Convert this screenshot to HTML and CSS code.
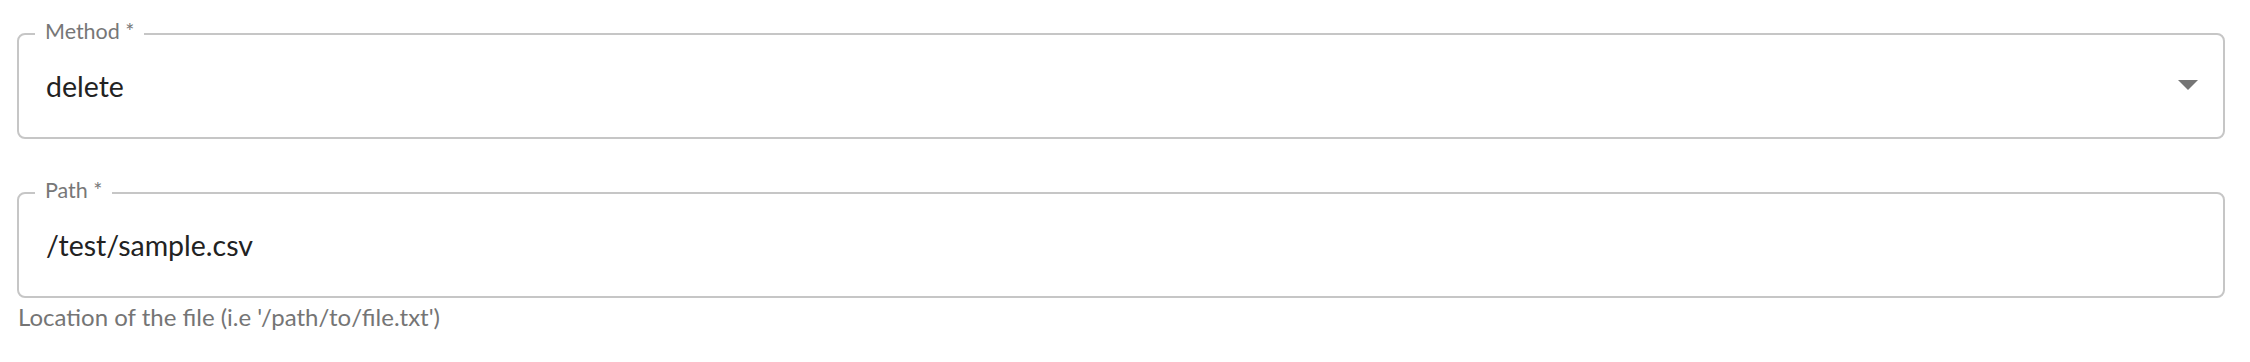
FILE: index.html
```html
<!DOCTYPE html>
<html lang="en">
<head>
<meta charset="utf-8">
<title>Form</title>
<link rel="stylesheet" href="styles.css">
</head>
<body>
<form class="form">
  <div class="field">
    <fieldset class="outline">
      <legend class="label">Method *</legend>
      <div class="control select">
        <span class="value">delete</span>
        <svg class="arrow" width="20" height="10" viewBox="0 0 20 10" aria-hidden="true"><path d="M0 0 L20 0 L10 10 Z" fill="#757575"/></svg>
      </div>
    </fieldset>
  </div>
  <div class="field">
    <fieldset class="outline">
      <legend class="label">Path *</legend>
      <div class="control">
        <span class="value">/test/sample.csv</span>
      </div>
    </fieldset>
    <p class="helper">Location of the file (i.e '/path/to/file.txt')</p>
  </div>
</form>
</body>
</html>
```

FILE: styles.css
```css
html, body {
  margin: 0;
  padding: 0;
  background: #ffffff;
}
body {
  font-family: "Lato", "Noto Sans", sans-serif;
}
.form {
  display: flex;
  flex-direction: column;
  gap: 39px;
  padding: 19px 25px 0 17px;
}
.field {
  display: flex;
  flex-direction: column;
}
.outline {
  margin: 0;
  padding: 0;
  border: 2px solid #c6c6c6;
  border-radius: 8px;
  min-width: 0;
}
.label {
  margin-left: 16px;
  padding: 0 10px 5px 10px;
  font-size: 21.5px;
  line-height: 24px;
  color: #777777;
}
.control {
  display: flex;
  align-items: center;
  padding: 21px 25px 34px 27px;
  height: 34px;
}
.select {
  justify-content: space-between;
}
.select .arrow {
  margin-top: -2px;
}
.value {
  font-size: 28.5px;
  line-height: 34px;
  color: #222222;
}
.arrow {
  display: block;
}
.helper {
  margin: 5px 0 0 1px;
  font-size: 24px;
  line-height: 28px;
  color: #757575;
}
```
